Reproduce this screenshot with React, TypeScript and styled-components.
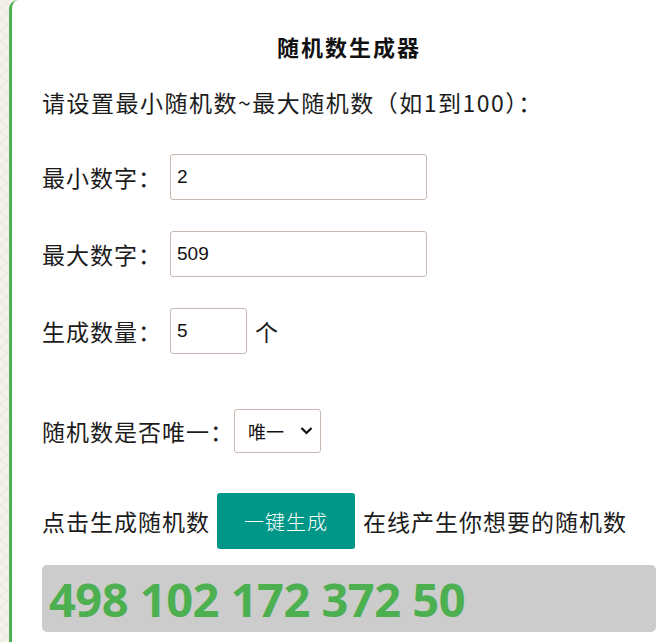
import React, { useState } from "react";
import styled, { createGlobalStyle } from "styled-components";

const Global = createGlobalStyle`
  html, body { margin: 0; padding: 0; }
  body {
    background-color: #f4f1e9;
    background-image:
      repeating-linear-gradient(45deg, rgba(0,0,0,0.018) 0 2px, transparent 2px 8px),
      repeating-linear-gradient(-45deg, rgba(0,0,0,0.018) 0 2px, transparent 2px 8px);
    overflow: hidden;
    font-family: "Noto Sans CJK SC", "Noto Sans", sans-serif;
    color: #1c1c1c;
  }
`;

const Page = styled.div`
  padding-left: 9px;
  height: 642px;
`;

const Card = styled.div`
  background: #fff;
  border-left: 3px solid #4cb050;
  border-top-left-radius: 9px;
  height: 100%;
  padding: 28px 13px 0 30px;
  box-sizing: border-box;
`;

const Title = styled.h1`
  margin: 0;
  font-size: 22px;
  letter-spacing: 2px;
  line-height: 36px;
  font-weight: 700;
  text-align: center;
  color: #111;
`;

const Intro = styled.p`
  margin: 20px 0 0;
  font-size: 23px;
  line-height: 36px;
  letter-spacing: 1.5px;
`;

const Row = styled.div<{ $top: number }>`
  display: flex;
  align-items: center;
  margin-top: ${(p) => p.$top}px;
  font-size: 23px;
  letter-spacing: 1px;
  white-space: nowrap;
`;

const Label = styled.span<{ $w?: number }>`
  display: inline-block;
  width: ${(p) => (p.$w ? `${p.$w}px` : "auto")};
`;

const TextInput = styled.input<{ $w: number }>`
  width: ${(p) => p.$w}px;
  height: 46px;
  box-sizing: border-box;
  border: 1px solid #c9bab1;
  border-radius: 3px;
  padding: 0 6px;
  font-family: "Liberation Sans", Arial, sans-serif;
  font-size: 19px;
  color: #111;
  outline: none;
  background: #fff;
`;

const Unit = styled.span`
  margin-left: 8px;
`;

const SelectWrap = styled.div`
  position: relative;
  width: 87px;
  height: 44px;
`;

const Select = styled.select`
  appearance: none;
  -webkit-appearance: none;
  width: 100%;
  height: 100%;
  box-sizing: border-box;
  border: 1px solid #c9bab1;
  border-radius: 3px;
  padding: 0 0 0 13px;
  font-family: "Noto Sans CJK SC", sans-serif;
  font-size: 18px;
  color: #111;
  background: #fff;
  outline: none;
`;

const Chevron = styled.svg`
  position: absolute;
  right: 8px;
  top: 17px;
  pointer-events: none;
`;

const Button = styled.button`
  width: 138px;
  height: 56px;
  margin: 0 8px 0 7px;
  border: none;
  border-radius: 3px;
  background: #009688;
  color: #fff;
  font-family: "Noto Sans CJK SC", sans-serif;
  font-weight: 300;
  font-size: 20px;
  letter-spacing: 1px;
  cursor: pointer;
`;

const Result = styled.div`
  margin-top: 16px;
  height: 67px;
  background: #cccccc;
  border-radius: 5px;
  display: flex;
  align-items: center;
  padding-left: 7px;
  font-family: "Open Sans", "Noto Sans", sans-serif;
  font-weight: 700;
  font-size: 47px;
  color: #4caf50;
  letter-spacing: -0.5px;
`;

export default function App() {
  const [min, setMin] = useState("2");
  const [max, setMax] = useState("509");
  const [count, setCount] = useState("5");
  const [unique, setUnique] = useState("1");
  const [result, setResult] = useState("498 102 172 372 50");

  const generate = () => {
    const lo = parseInt(min, 10) || 0;
    const hi = parseInt(max, 10) || 0;
    const n = parseInt(count, 10) || 0;
    const out: number[] = [];
    let guard = 0;
    while (out.length < n && guard < 10000) {
      guard++;
      const v = lo + Math.floor(Math.random() * (hi - lo + 1));
      if (unique === "1" && out.includes(v)) continue;
      out.push(v);
    }
    setResult(out.join(" "));
  };

  return (
    <Page>
      <Global />
      <Card>
        <Title>随机数生成器</Title>
        <Intro>请设置最小随机数~最大随机数（如1到100）：</Intro>
        <Row $top={34}>
          <Label $w={128}>最小数字：</Label>
          <TextInput $w={257} value={min} onChange={(e) => setMin(e.target.value)} />
        </Row>
        <Row $top={31}>
          <Label $w={128}>最大数字：</Label>
          <TextInput $w={257} value={max} onChange={(e) => setMax(e.target.value)} />
        </Row>
        <Row $top={31}>
          <Label $w={128}>生成数量：</Label>
          <TextInput $w={77} value={count} onChange={(e) => setCount(e.target.value)} />
          <Unit>个</Unit>
        </Row>
        <Row $top={55}>
          <Label $w={192}>随机数是否唯一：</Label>
          <SelectWrap>
            <Select value={unique} onChange={(e) => setUnique(e.target.value)}>
              <option value="1">唯一</option>
              <option value="0">可重复</option>
            </Select>
            <Chevron width="13" height="9" viewBox="0 0 13 9">
              <path d="M1.5 2 L6.5 7 L11.5 2" fill="none" stroke="#111" strokeWidth="2.2" />
            </Chevron>
          </SelectWrap>
        </Row>
        <Row $top={40}>
          <Label>点击生成随机数</Label>
          <Button onClick={generate}>一键生成</Button>
          <Label>在线产生你想要的随机数</Label>
        </Row>
        <Result>{result}</Result>
      </Card>
    </Page>
  );
}
